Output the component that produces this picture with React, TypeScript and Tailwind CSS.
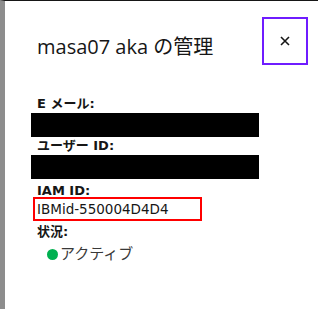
import React from "react";

export default function App() {
  return (
    <div className="w-[318px] h-[309px] bg-white border-t border-t-[#161616] border-l-[5px] border-l-[#8d8d8d] overflow-hidden">
      <div className="flex justify-between pr-[10px]">
        <h2 className="ml-[32px] mt-[32px] text-[20px] leading-[28px] text-[#161616] font-['Open_Sans','Noto_Sans_CJK_JP',sans-serif]">
          masa07 aka の管理
        </h2>
        <button className="mt-[16px] w-[46px] h-[48px] border-2 border-[#6f1cff] flex items-center justify-center">
          <svg width="10" height="10" viewBox="0 0 10 10" fill="none">
            <path d="M1 1L9 9M9 1L1 9" stroke="#161616" strokeWidth="1.6" />
          </svg>
        </button>
      </div>
      <div className="mt-[30px] flex flex-col font-['DejaVu_Sans','Noto_Sans_CJK_JP',sans-serif] text-[#161616]">
        <div className="pl-[32px] h-[18px] leading-[18px] text-[13px] font-bold">E メール:</div>
        <div className="ml-[26px] w-[228px] h-[24px] bg-black" />
        <div className="pl-[32px] h-[18px] leading-[18px] text-[13px] font-bold">ユーザー ID:</div>
        <div className="ml-[26px] w-[228px] h-[24px] bg-black" />
        <div className="pl-[32px] mt-[6px] h-[12px] leading-[12px] text-[13px] font-bold">IAM ID:</div>
        <div className="ml-[28px] w-[169px] h-[24px] border-2 border-[#ff0000] pl-[2px] flex items-center text-[13.5px]">
          IBMid-550004D4D4
        </div>
        <div className="pl-[32px] mt-[3px] h-[16px] leading-[16px] text-[13px] font-bold">状況:</div>
        <div className="pl-[42px] mt-[4px] h-[20px] leading-[20px] flex items-center gap-[2px] text-[15px] text-[#393939]">
          <span className="w-[11px] h-[11px] rounded-full bg-[#00b050] inline-block" />
          <span>アクティブ</span>
        </div>
      </div>
    </div>
  );
}
